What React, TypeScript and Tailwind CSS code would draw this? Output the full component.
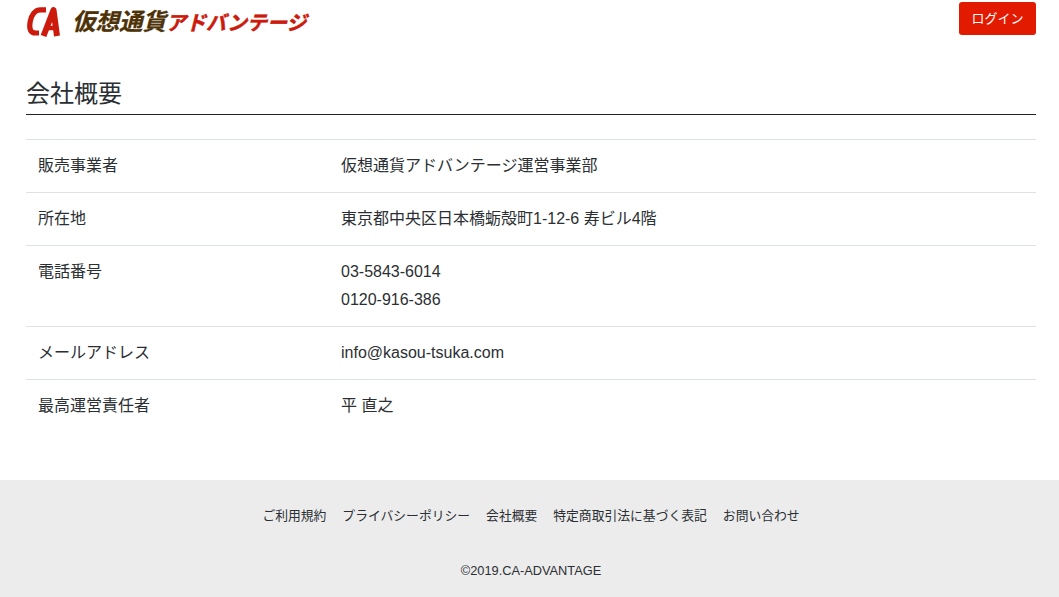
const jp = "font-['Liberation_Sans','Noto_Sans_CJK_JP',sans-serif]";

const rows: { label: string; values: string[] }[] = [
  { label: "販売事業者", values: ["仮想通貨アドバンテージ運営事業部"] },
  { label: "所在地", values: ["東京都中央区日本橋蛎殻町1-12-6 寿ビル4階"] },
  { label: "電話番号", values: ["03-5843-6014", "0120-916-386"] },
  { label: "メールアドレス", values: ["info@kasou-tsuka.com"] },
  { label: "最高運営責任者", values: ["平 直之"] },
];

const links = ["ご利用規約", "プライバシーポリシー", "会社概要", "特定商取引法に基づく表記", "お問い合わせ"];

function Mark() {
  return (
    <svg width="36" height="32" viewBox="0 0 36 32" fill="none" stroke="#cc1a0c" className="shrink-0">
      <path d="M20 3.8 H14.5 C9 3.8 5.5 9 4.2 15.5 C2.8 23 4.5 27 9.5 27 H13" strokeWidth="5.2" />
      <path d="M17.5 30 L27.5 4 L31 30" strokeWidth="6" strokeLinejoin="round" />
      <path d="M21 22 H30" strokeWidth="4.5" />
    </svg>
  );
}

export default function App() {
  return (
    <div className={`${jp} h-[597px] w-[1059px] flex flex-col bg-white text-[#2b2f33] overflow-hidden`}>
      <header className="flex justify-between items-start pl-[26px] pr-[23px] pt-[2px] h-[38px]">
        <div className="flex items-center h-[36px] select-none mt-[2px]">
          <Mark />
          <div className="flex items-center italic font-bold ml-[10px] mt-[1px]">
            <span className="text-[#4d3208] text-[23.5px] leading-none [-webkit-text-stroke:0.3px_#4d3208]">仮想通貨</span>
            <span className="text-[#cc1a0c] text-[20px] leading-none [-webkit-text-stroke:0.5px_#cc1a0c]">アドバンテージ</span>
          </div>
        </div>
        <button className="w-[77px] h-[33px] rounded-[3px] bg-[#e21a00] text-white text-[13px] flex items-center justify-center">
          ログイン
        </button>
      </header>

      <main className="pl-[26px] pr-[23px] flex-1">
        <h1 className="mt-[38px] text-[24px] leading-[36px] h-[39px] border-b border-[#212529] font-normal">会社概要</h1>
        <div className="mt-[24px] border-t border-[#dee2e6]">
          {rows.map((r, i) => (
            <div
              key={r.label}
              className={`flex text-[16px] leading-[28px] py-[12px] ${i < rows.length - 1 ? "border-b border-[#dee2e6]" : ""}`}
            >
              <div className="w-[315px] pl-[12px] shrink-0">{r.label}</div>
              <div>
                {r.values.map((v) => (
                  <div key={v}>{v}</div>
                ))}
              </div>
            </div>
          ))}
        </div>
      </main>

      <footer className="h-[117px] bg-[#ececec] flex flex-col items-center">
        <nav className="mt-[26px] flex gap-[16px] text-[12.8px] leading-[20px] ml-[3px]">
          {links.map((l) => (
            <span key={l}>{l}</span>
          ))}
        </nav>
        <p className="mt-[36px] text-[12.8px] leading-[18px] ml-[3px]">©2019.CA-ADVANTAGE</p>
      </footer>
    </div>
  );
}
